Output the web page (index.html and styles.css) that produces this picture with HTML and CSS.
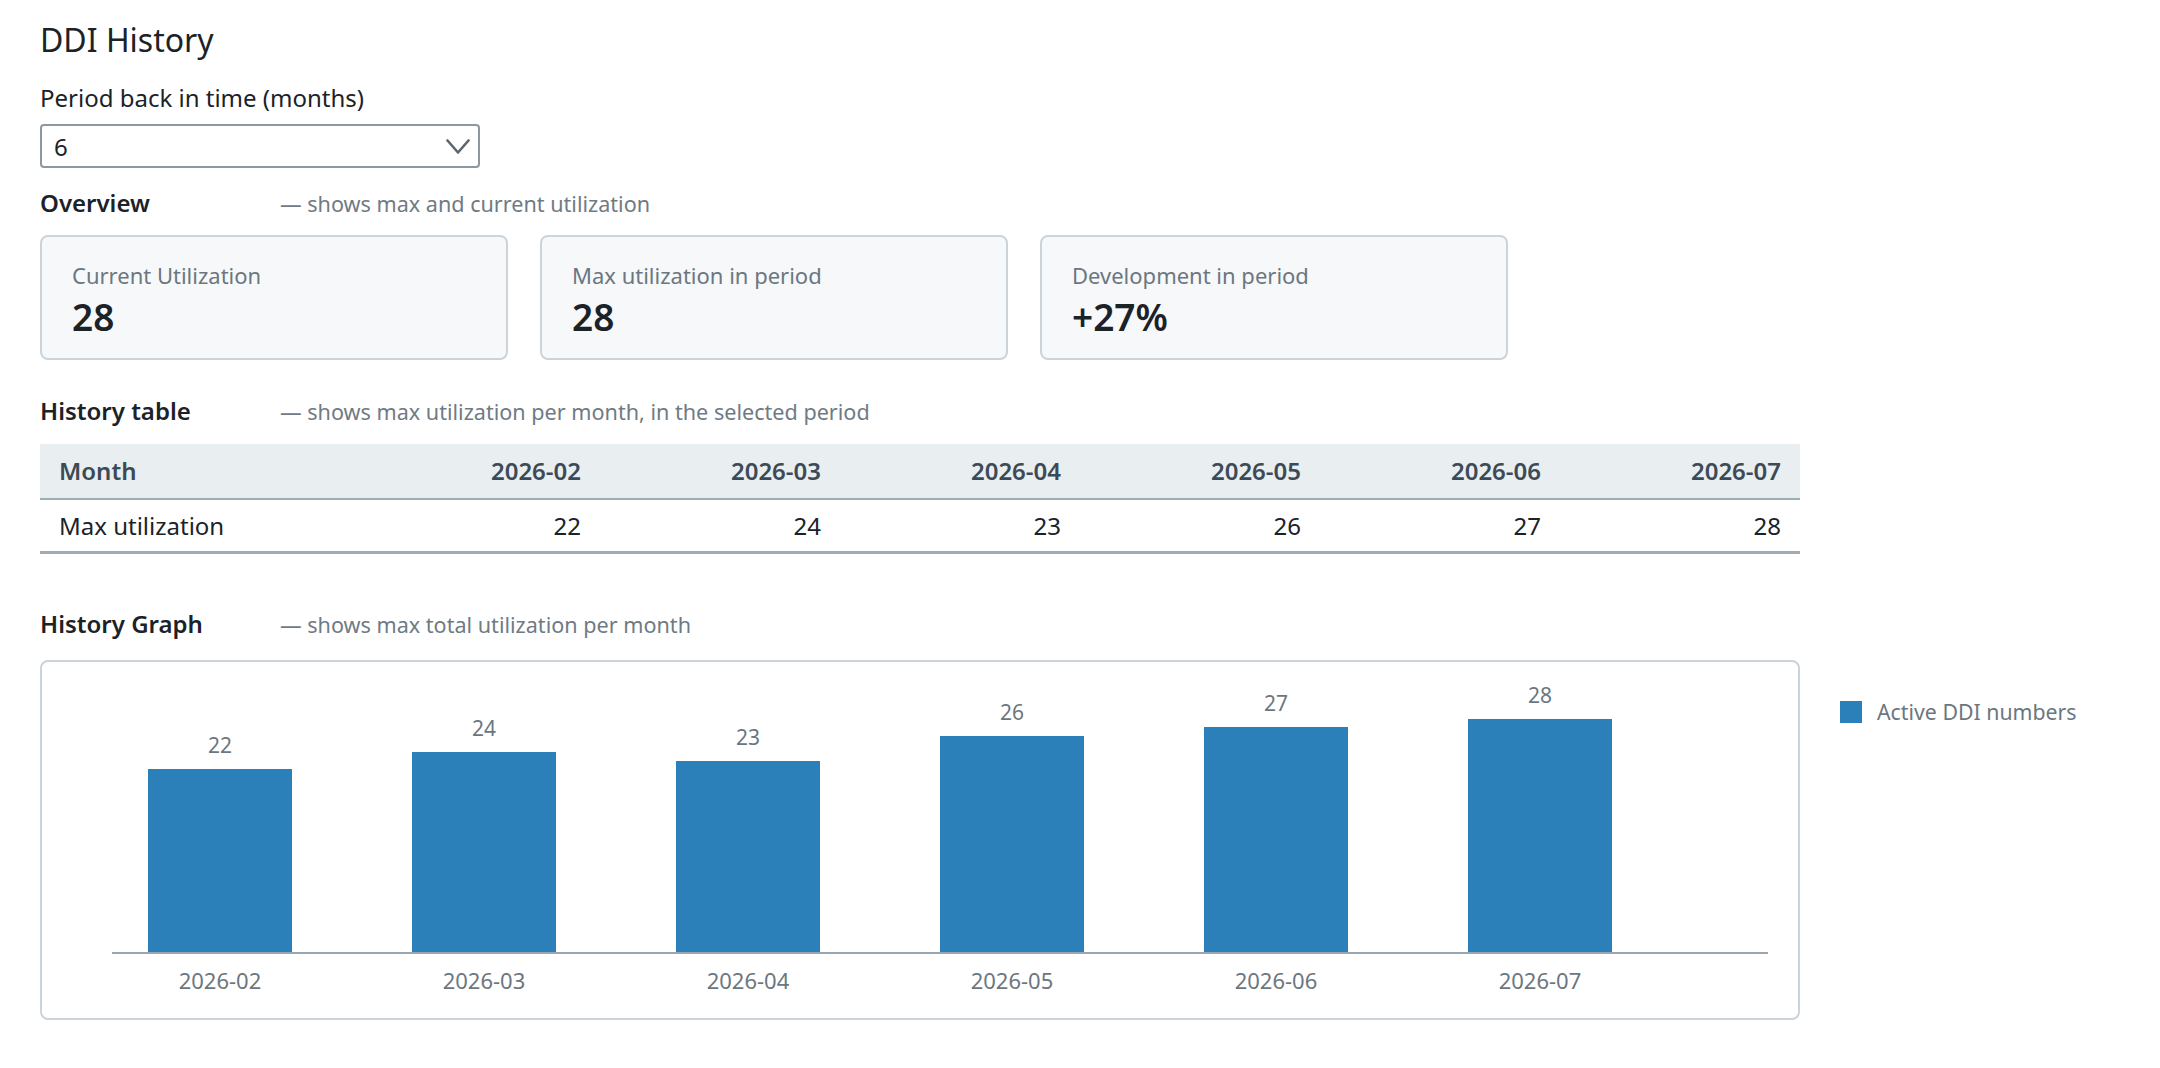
FILE: index.html
```html
<!DOCTYPE html>
<html lang="en">
<head>
    <meta charset="UTF-8">
    <meta name="viewport" content="width=device-width, initial-scale=1.0">
    <title>DDI History</title>
    <link rel="stylesheet" href="styles.css">
</head>
<body>
    <h1>DDI History</h1>

    <label class="field-label" for="period">Period back in time (months)</label>
    <div class="select-wrap">
        <select id="period" class="select">
            <option>3</option>
            <option selected>6</option>
            <option>12</option>
        </select>
        <svg class="chevron" width="24" height="16" viewBox="0 0 24 16">
            <polyline points="1.5,1.5 12,13.5 22.5,1.5" fill="none" stroke="#5b6872" stroke-width="2.6" stroke-linecap="round" stroke-linejoin="round"/>
        </svg>
    </div>

    <div class="section-head">
        <h2>Overview</h2>
        <span class="section-desc">— shows max and current utilization</span>
    </div>

    <div class="cards">
        <div class="card">
            <div class="card-label">Current Utilization</div>
            <div class="card-value">28</div>
        </div>
        <div class="card">
            <div class="card-label">Max utilization in period</div>
            <div class="card-value">28</div>
        </div>
        <div class="card">
            <div class="card-label">Development in period</div>
            <div class="card-value">+27%</div>
        </div>
    </div>

    <div class="section-head head-table">
        <h2>History table</h2>
        <span class="section-desc">— shows max utilization per month, in the selected period</span>
    </div>

    <table class="history">
        <thead>
            <tr>
                <th>Month</th>
                <th>2026-02</th>
                <th>2026-03</th>
                <th>2026-04</th>
                <th>2026-05</th>
                <th>2026-06</th>
                <th>2026-07</th>
            </tr>
        </thead>
        <tbody>
            <tr>
                <td>Max utilization</td>
                <td>22</td>
                <td>24</td>
                <td>23</td>
                <td>26</td>
                <td>27</td>
                <td>28</td>
            </tr>
        </tbody>
    </table>

    <div class="section-head head-graph">
        <h2>History Graph</h2>
        <span class="section-desc">— shows max total utilization per month</span>
    </div>

    <div class="graph-row">
        <div class="graph-box">
            <div class="plot">
                <div class="col"><span class="bar-value">22</span><div class="bar" style="height: 183px"></div></div>
                <div class="col"><span class="bar-value">24</span><div class="bar" style="height: 200px"></div></div>
                <div class="col"><span class="bar-value">23</span><div class="bar" style="height: 191px"></div></div>
                <div class="col"><span class="bar-value">26</span><div class="bar" style="height: 216px"></div></div>
                <div class="col"><span class="bar-value">27</span><div class="bar" style="height: 225px"></div></div>
                <div class="col"><span class="bar-value">28</span><div class="bar" style="height: 233px"></div></div>
            </div>
            <div class="x-labels">
                <span>2026-02</span>
                <span>2026-03</span>
                <span>2026-04</span>
                <span>2026-05</span>
                <span>2026-06</span>
                <span>2026-07</span>
            </div>
        </div>
        <div class="legend">
            <span class="legend-swatch"></span>
            <span>Active DDI numbers</span>
        </div>
    </div>
</body>
</html>
```

FILE: styles.css
```css
body {
    font-family: "Noto Sans", "Open Sans", sans-serif;
    font-size: 24px;
    line-height: 32px;
    color: #1b2228;
    background: #fff;
    margin: 0;
    padding: 20px 40px 0 40px;
}
h1 {
    font-size: 32px;
    line-height: 40px;
    font-weight: 400;
    margin: 0 0 22px 0;
}
.field-label {
    display: block;
    margin-bottom: 10px;
}
.select-wrap {
    position: relative;
    width: 440px;
    height: 44px;
}
.select {
    appearance: none;
    -webkit-appearance: none;
    width: 100%;
    height: 100%;
    box-sizing: border-box;
    border: 2px solid #8d99a2;
    border-radius: 4px;
    background: #fff;
    font-family: inherit;
    font-size: 24px;
    color: #1b2228;
    padding: 0 12px;
}
.chevron {
    position: absolute;
    right: 10px;
    top: 15px;
    pointer-events: none;
}
.section-head {
    display: flex;
    align-items: baseline;
    height: 32px;
    margin-top: 19px;
}
.section-head h2 {
    width: 240px;
    flex-shrink: 0;
    font-size: 24px;
    line-height: 32px;
    font-weight: 600;
    margin: 0;
}
.section-desc {
    font-size: 21.6px;
    line-height: 24px;
    color: #6f7b84;
}
.head-table {
    margin-top: 35px;
}
.head-graph {
    margin-top: 54px;
}
.cards {
    display: flex;
    gap: 32px;
    margin-top: 16px;
}
.card {
    width: 468px;
    box-sizing: border-box;
    background: #f6f8fa;
    border: 2px solid #cbd4db;
    border-radius: 8px;
    padding: 24px 30px 19px 30px;
}
.card-label {
    font-size: 22px;
    line-height: 28px;
    color: #6b7780;
}
.card-value {
    font-size: 37px;
    line-height: 44px;
    font-weight: 600;
    margin-top: 6px;
}
.history {
    width: 1760px;
    table-layout: fixed;
    border-collapse: collapse;
    margin-top: 17px;
}
.history th, .history td {
    box-sizing: border-box;
    width: 240px;
    text-align: right;
    padding: 10px 19px 9px 19px;
}
.history th:first-child, .history td:first-child {
    width: 320px;
    text-align: left;
}
.history th {
    background: #e9eef1;
    color: #3d4a55;
    font-weight: 600;
    padding-top: 11px;
    padding-bottom: 11px;
    border-bottom: 2px solid #a0acb4;
}
.history td {
    border-bottom: 3px solid #a0acb4;
}
.graph-row {
    display: flex;
    align-items: flex-start;
    gap: 40px;
    margin-top: 20px;
}
.graph-box {
    width: 1760px;
    box-sizing: border-box;
    border: 2px solid #cbd4db;
    border-radius: 8px;
    padding: 0 30px 24px 70px;
}
.plot, .x-labels {
    display: grid;
    grid-template-columns: repeat(6, 144px);
    column-gap: 120px;
    padding-left: 36px;
}
.plot {
    height: 290px;
    border-bottom: 2px solid #9aa5ae;
    align-items: end;
}
.col {
    display: flex;
    flex-direction: column;
    align-items: center;
}
.bar-value {
    font-size: 21px;
    line-height: 24px;
    color: #6b7780;
    margin-bottom: 12px;
}
.bar {
    width: 144px;
    background: #2c80b9;
}
.x-labels {
    margin-top: 12px;
    font-size: 22px;
    line-height: 28px;
    color: #6b7780;
}
.x-labels span {
    text-align: center;
    white-space: nowrap;
}
.legend {
    display: flex;
    align-items: center;
    gap: 15px;
    margin-top: 38px;
    font-size: 21.3px;
    line-height: 28px;
    color: #6b7780;
}
.legend-swatch {
    width: 22px;
    height: 22px;
    background: #2c80b9;
}
```
